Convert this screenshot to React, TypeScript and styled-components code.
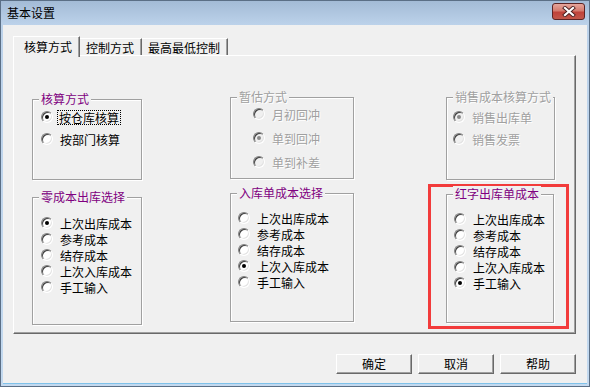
import { createGlobalStyle, styled } from "styled-components";

type Opt = { label: string; checked?: boolean; focus?: boolean };

type Group = {
  title: string;
  disabled?: boolean;
  w: number;
  h: number;
  mt: number;
  ml?: number;
  pt: number;
  pl: number;
  rowH: number;
  options: Opt[];
};

const costOptions = (checkedIndex: number): Opt[] =>
  ["上次出库成本", "参考成本", "结存成本", "上次入库成本", "手工输入"].map((label, i) => ({
    label,
    checked: i === checkedIndex,
  }));

const accounting: Group = {
  title: "核算方式",
  w: 110, h: 81, mt: 43, pt: 6, pl: 8, rowH: 22,
  options: [{ label: "按仓库核算", checked: true, focus: true }, { label: "按部门核算" }],
};

const zeroCost: Group = {
  title: "零成本出库选择",
  w: 110, h: 128, mt: 17, pt: 17, pl: 8, rowH: 16,
  options: costOptions(0),
};

const estimate: Group = {
  title: "暂估方式",
  disabled: true,
  w: 124, h: 82, mt: 41, pt: 4, pl: 22, rowH: 24,
  options: [{ label: "月初回冲" }, { label: "单到回冲", checked: true }, { label: "单到补差" }],
};

const inbound: Group = {
  title: "入库单成本选择",
  w: 124, h: 129, mt: 14, pt: 16, pl: 7, rowH: 16,
  options: costOptions(3),
};

const sales: Group = {
  title: "销售成本核算方式",
  disabled: true,
  w: 109, h: 83, mt: 41, ml: 18, pt: 8, pl: 6, rowH: 22,
  options: [{ label: "销售出库单", checked: true }, { label: "销售发票" }],
};

const redCost: Group = {
  title: "红字出库单成本",
  w: 108, h: 129, mt: 0, pt: 16, pl: 7, rowH: 16,
  options: costOptions(4),
};

const GroupBlock = ({ g }: { g: Group }) => (
  <GroupBox $w={g.w} $h={g.h} $mt={g.mt} $ml={g.ml ?? 0} $pt={g.pt} $pl={g.pl}>
    <GroupTitle $disabled={!!g.disabled}>{g.title}</GroupTitle>
    {g.options.map((o) => (
      <OptionRow key={o.label} $h={g.rowH}>
        <Radio $checked={!!o.checked} $disabled={!!g.disabled} />
        <OptionLabel $disabled={!!g.disabled} $focus={!!o.focus}>
          {o.label}
        </OptionLabel>
      </OptionRow>
    ))}
  </GroupBox>
);

const App = () => {
  return (
    <>
      <GlobalStyle />
      <Window>
        <TitleBar>
          <TitleText>基本设置</TitleText>
          <CloseButton>
            <svg width="16" height="11" viewBox="0 0 16 11">
              <path d="M4 2 L12 9 M12 2 L4 9" stroke="#4a2020" strokeWidth="4" strokeLinecap="square" />
              <path d="M4 2 L12 9 M12 2 L4 9" stroke="#ffffff" strokeWidth="2.2" strokeLinecap="square" />
            </svg>
          </CloseButton>
        </TitleBar>
        <Client>
          <TabStrip>
            <Tab $active>核算方式</Tab>
            <Tab>控制方式</Tab>
            <Tab>最高最低控制</Tab>
          </TabStrip>
          <TabPanel>
            <Column $ml={18}>
              <GroupBlock g={accounting} />
              <GroupBlock g={zeroCost} />
            </Column>
            <Column $ml={88}>
              <GroupBlock g={estimate} />
              <GroupBlock g={inbound} />
            </Column>
            <Column $ml={74}>
              <GroupBlock g={sales} />
              <Highlight>
                <GroupBlock g={redCost} />
              </Highlight>
            </Column>
          </TabPanel>
          <ButtonRow>
            <DialogButton>确定</DialogButton>
            <DialogButton>取消</DialogButton>
            <DialogButton>帮助</DialogButton>
          </ButtonRow>
        </Client>
      </Window>
    </>
  );
};

const GlobalStyle = createGlobalStyle`
  html, body {
    margin: 0;
    padding: 0;
    background: #ffffff;
  }
  body {
    font-family: "Noto Sans CJK SC", "Liberation Sans", sans-serif;
    font-size: 12px;
  }
`;

const Window = styled.div`
  width: 590px;
  height: 387px;
  box-sizing: border-box;
  display: flex;
  flex-direction: column;
  border: 1px solid #5b6f86;
  background: linear-gradient(to bottom, #a3bbd6 0px, #bcd2ea 24px, #c3d9ef 100%);
`;

const TitleBar = styled.div`
  height: 24px;
  flex-shrink: 0;
  display: flex;
  align-items: center;
  justify-content: space-between;
  padding: 0 4px 0 6px;
`;

const TitleText = styled.span`
  font-size: 12px;
  color: #000;
  line-height: 14px;
`;

const CloseButton = styled.div`
  width: 33px;
  height: 17px;
  box-sizing: border-box;
  margin-top: -4px;
  border: 1px solid #5c2424;
  border-radius: 3px;
  background: linear-gradient(to bottom, #e6a69c 0%, #d57b6e 45%, #c0433a 55%, #c2574a 100%);
  display: flex;
  align-items: center;
  justify-content: center;
`;

const Client = styled.div`
  flex: 1;
  margin: 0 2px 2px 2px;
  background: #f0f0f0;
  border-bottom: 1px solid #7fc2ea;
  padding: 11px 11px 0 10px;
  display: flex;
  flex-direction: column;
`;

const TabStrip = styled.div`
  height: 19px;
  display: flex;
  align-items: flex-end;
  position: relative;
  z-index: 1;
`;

const Tab = styled.div<{ $active?: boolean }>`
  box-sizing: border-box;
  height: ${(p) => (p.$active ? 21 : 17)}px;
  margin-bottom: ${(p) => (p.$active ? -2 : 0)}px;
  padding: ${(p) => (p.$active ? "0 7px 0 10px" : "0 7px 0 6px")};
  display: flex;
  align-items: center;
  background: #f0f0f0;
  color: #000;
  border-top: 1px solid #ffffff;
  border-left: ${(p) => (p.$active ? "1px solid #ffffff" : "none")};
  border-right: 1px solid #696969;
  box-shadow: inset -1px 0 0 #a0a0a0;
  line-height: 14px;
  padding-top: ${(p) => (p.$active ? 0 : 1)}px;
`;

const TabPanel = styled.div`
  height: 279px;
  box-sizing: border-box;
  border-top: 1px solid #ffffff;
  border-left: 1px solid #ffffff;
  border-right: 1px solid #696969;
  border-bottom: 1px solid #696969;
  box-shadow: inset -1px -1px 0 #a0a0a0;
  display: flex;
  align-items: flex-start;
`;

const Column = styled.div<{ $ml: number }>`
  display: flex;
  flex-direction: column;
  align-items: flex-start;
  margin-left: ${(p) => p.$ml}px;
`;

const GroupBox = styled.div<{ $w: number; $h: number; $mt: number; $ml: number; $pt: number; $pl: number }>`
  position: relative;
  box-sizing: border-box;
  width: ${(p) => p.$w}px;
  height: ${(p) => p.$h}px;
  margin-top: ${(p) => p.$mt}px;
  margin-left: ${(p) => p.$ml}px;
  padding: ${(p) => p.$pt}px 0 0 ${(p) => p.$pl}px;
  border: 1px solid #a0a0a0;
  box-shadow: 1px 1px 0 #ffffff, inset 1px 1px 0 #ffffff;
`;

const GroupTitle = styled.span<{ $disabled: boolean }>`
  position: absolute;
  top: -9px;
  left: 6px;
  padding: 0 2px;
  line-height: 16px;
  background: #f0f0f0;
  white-space: nowrap;
  color: ${(p) => (p.$disabled ? "#a0a0a0" : "#800080")};
  text-shadow: ${(p) => (p.$disabled ? "1px 1px 0 #ffffff" : "none")};
`;

const OptionRow = styled.div<{ $h: number }>`
  height: ${(p) => p.$h}px;
  display: flex;
  align-items: center;
  gap: 5px;
`;

const Radio = styled.span<{ $checked: boolean; $disabled: boolean }>`
  width: 12px;
  height: 12px;
  box-sizing: border-box;
  flex-shrink: 0;
  border-radius: 50%;
  border: 1px solid;
  border-color: #808080 #ffffff #ffffff #808080;
  box-shadow: inset 1px 1px 0 #404040, inset -1px -1px 0 #e3e3e3;
  background: ${(p) => (p.$disabled ? "#f0f0f0" : "#ffffff")};
  position: relative;

  &::after {
    content: "";
    display: ${(p) => (p.$checked ? "block" : "none")};
    position: absolute;
    left: 3px;
    top: 3px;
    width: 4px;
    height: 4px;
    border-radius: 50%;
    background: ${(p) => (p.$disabled ? "#8a8a8a" : "#000000")};
  }
`;

const OptionLabel = styled.span<{ $disabled: boolean; $focus: boolean }>`
  white-space: nowrap;
  line-height: 13px;
  padding: 0 1px;
  margin-left: ${(p) => (p.$focus ? 0 : 1)}px;
  color: ${(p) => (p.$disabled ? "#a0a0a0" : "#000000")};
  text-shadow: ${(p) => (p.$disabled ? "1px 1px 0 #ffffff" : "none")};
  outline: ${(p) => (p.$focus ? "1px dotted #000000" : "none")};
`;

const Highlight = styled.div`
  box-sizing: border-box;
  width: 141px;
  height: 145px;
  margin-top: 4px;
  border: 3px solid #f23b3b;
  padding: 7px 0 0 15px;
`;

const ButtonRow = styled.div`
  display: flex;
  justify-content: flex-end;
  gap: 6px;
  margin-top: 20px;
`;

const DialogButton = styled.div`
  width: 76px;
  height: 20px;
  box-sizing: border-box;
  display: flex;
  align-items: center;
  justify-content: center;
  background: #f0f0f0;
  color: #000;
  border: 1px solid;
  border-color: #ffffff #696969 #696969 #ffffff;
  box-shadow: inset -1px -1px 0 #a0a0a0;
  line-height: 14px;
`;

export default App;
